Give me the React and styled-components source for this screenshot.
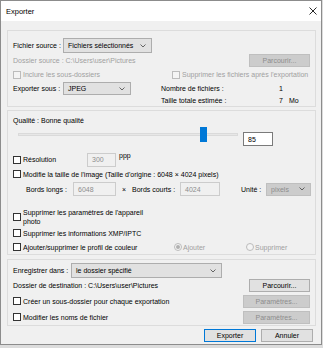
import React from 'react'
import styled, { createGlobalStyle } from 'styled-components'

const GlobalStyle = createGlobalStyle`
  html, body {
    margin: 0;
    padding: 0;
    background: #dcdcdc;
  }
  body {
    font-family: "Liberation Sans", Arial, sans-serif;
    font-size: 7px;
    color: #000;
  }
`

const Window = styled.div`
  box-sizing: border-box;
  width: 322px;
  height: 345px;
  border: 1px solid #8c8c8c;
  background: #f0f0f0;
  display: flex;
  flex-direction: column;
`

const TitleBar = styled.div`
  height: 20px;
  background: #fff;
  display: flex;
  align-items: center;
  justify-content: space-between;
  padding: 0 4px 0 5px;
  font-size: 7.5px;
`

const Content = styled.div`
  padding: 8px 5px 0 6px;
  display: flex;
  flex-direction: column;
`

const Group = styled.div`
  border: 1px solid #dcdcdc;
  margin-top: ${p => p.$mt || 0}px;
  padding: 0 5px ${p => p.$pb || 0}px 5px;
  display: flex;
  flex-direction: column;
`

const Row = styled.div`
  display: flex;
  align-items: ${p => p.$align || 'center'};
  height: ${p => p.$h}px;
  margin-top: ${p => p.$mt || 0}px;
  padding-left: ${p => p.$pl || 0}px;
`

const Label = styled.span`
  color: ${p => (p.$disabled ? '#a0a0a0' : '#000')};
  width: ${p => (p.$w ? `${p.$w}px` : 'auto')};
  flex: none;
  white-space: nowrap;
`

const Cell = styled.div`
  display: flex;
  align-items: center;
  width: ${p => p.$w}px;
  flex: none;
`

const Combo = styled.div`
  box-sizing: border-box;
  width: ${p => p.$w}px;
  height: ${p => p.$h || 15}px;
  border: 1px solid ${p => (p.$disabled ? '#bfbfbf' : '#adadad')};
  background: ${p => (p.$disabled ? '#cccccc' : '#e1e1e1')};
  color: ${p => (p.$disabled ? '#8d8d8d' : '#000')};
  display: flex;
  align-items: center;
  justify-content: space-between;
  padding: 0 5px 0 4px;
  flex: none;
`

const Field = styled.div`
  box-sizing: border-box;
  width: ${p => p.$w}px;
  height: 14px;
  border: 1px solid ${p => (p.$disabled ? '#cccccc' : '#7a7a7a')};
  background: ${p => (p.$disabled ? '#f0f0f0' : '#fff')};
  color: ${p => (p.$disabled ? '#8d8d8d' : '#000')};
  display: flex;
  align-items: center;
  padding-left: 4px;
  margin-top: ${p => p.$mt || 0}px;
  flex: none;
`

const Button = styled.div`
  box-sizing: border-box;
  width: ${p => p.$w}px;
  height: 13px;
  margin-left: ${p => (p.$auto ? 'auto' : '0')};
  border: 1px solid ${p => (p.$default ? '#0078d7' : p.$disabled ? '#bfbfbf' : '#adadad')};
  background: ${p => (p.$disabled ? '#cccccc' : '#e1e1e1')};
  color: ${p => (p.$disabled ? '#8d8d8d' : '#000')};
  display: flex;
  align-items: center;
  justify-content: center;
  flex: none;
`

const Box = styled.span`
  box-sizing: border-box;
  width: 8px;
  height: 8px;
  border: 1px solid ${p => (p.$disabled ? '#bcbcbc' : '#333')};
  background: ${p => (p.$disabled ? '#f4f4f4' : '#fff')};
  margin-right: 2px;
  flex: none;
`

const Radio = styled.span`
  box-sizing: border-box;
  width: 8px;
  height: 8px;
  border-radius: 50%;
  border: 1px solid #bcbcbc;
  background: #f4f4f4;
  margin-right: 1px;
  flex: none;
  display: flex;
  align-items: center;
  justify-content: center;
  &::after {
    content: '';
    display: ${p => (p.$on ? 'block' : 'none')};
    width: 4px;
    height: 4px;
    border-radius: 50%;
    background: #b0b0b0;
  }
`

const SliderWrap = styled.div`
  position: relative;
  width: 220px;
  height: 15px;
  margin-left: 5px;
  flex: none;
  display: flex;
  align-items: center;
`

const Track = styled.div`
  width: 100%;
  height: 3px;
  background: #e7e7e7;
  border: 1px solid #dadada;
  box-sizing: border-box;
`

const Thumb = styled.div`
  position: absolute;
  top: 0;
  left: 182px;
  width: 7px;
  height: 15px;
  background: #0078d7;
  box-sizing: border-box;
`

const Stats = styled.div`
  display: grid;
  grid-template-columns: 118px 10px auto;
  grid-auto-rows: 12px;
  align-items: center;
`

const Wrapped = styled.span`
  width: 130px;
  line-height: 9px;
`

const Footer = styled.div`
  display: flex;
  justify-content: flex-end;
  gap: 5px;
  margin-top: 3px;
  padding-right: 3px;
`

const Chevron = () => (
  <svg width="6" height="4" viewBox="0 0 6 4">
    <polyline points="0.5,0.5 3,3 5.5,0.5" fill="none" stroke="#444" strokeWidth="0.8" />
  </svg>
)

const Close = () => (
  <svg width="8" height="8" viewBox="0 0 8 8">
    <path d="M0.5 0.5 L7.5 7.5 M7.5 0.5 L0.5 7.5" stroke="#111" strokeWidth="0.9" />
  </svg>
)

const Check = ({ disabled, children, w }) => (
  <Cell $w={w}>
    <Box $disabled={disabled} />
    <Label $disabled={disabled}>{children}</Label>
  </Cell>
)

export default function App() {
  return (
    <>
      <GlobalStyle />
      <Window>
        <TitleBar>
          <span>Exporter</span>
          <Close />
        </TitleBar>
        <Content>
          <Group $mt={1}>
            <Row $h={15} $mt={7}>
              <Label $w={50}>Fichier source :</Label>
              <Combo $w={89}>
                <span>Fichiers sélectionnés</span>
                <Chevron />
              </Combo>
            </Row>
            <Row $h={14}>
              <Label $disabled>Dossier source : C:\Users\user\Pictures</Label>
              <Button $w={61} $auto $disabled>Parcourir...</Button>
            </Row>
            <Row $h={15}>
              <Check w={159} disabled>Inclure les sous-dossiers</Check>
              <Check disabled>Supprimer les fichiers après l'exportation</Check>
            </Row>
            <Row $h={24} $align="flex-start">
              <Cell $w={148}>
                <Label $w={50}>Exporter sous :</Label>
                <Combo $w={68} $h={13}>
                  <span>JPEG</span>
                  <Chevron />
                </Combo>
              </Cell>
              <Stats>
                <span>Nombre de fichiers :</span>
                <span>1</span>
                <span />
                <span>Taille totale estimée :</span>
                <span>7</span>
                <span>Mo</span>
              </Stats>
            </Row>
          </Group>

          <Group $mt={3}>
            <Row $h={12} $mt={3}>
              <Label>Qualité : Bonne qualité</Label>
            </Row>
            <Row $h={19} $mt={1} $align="flex-start">
              <SliderWrap>
                <Track />
                <Thumb />
              </SliderWrap>
              <Field $w={30} $mt={5} style={{ marginLeft: 5 }}>85</Field>
            </Row>
            <Row $h={15} $mt={6}>
              <Check w={74}>Résolution</Check>
              <Field $w={29} $disabled>300</Field>
              <Label style={{ marginLeft: 3, alignSelf: 'flex-start' }}>ppp</Label>
            </Row>
            <Row $h={14}>
              <Check>Modifie la taille de l'image (Taille d'origine : 6048 × 4024 pixels)</Check>
            </Row>
            <Row $h={16} $pl={13}>
              <Label $w={47}>Bords longs :</Label>
              <Field $w={43} $disabled>6048</Field>
              <Label $w={16} style={{ textAlign: 'center' }}>×</Label>
              <Label $w={48}>Bords courts :</Label>
              <Field $w={40} $disabled>4024</Field>
              <Label $w={25} style={{ marginLeft: 21 }}>Unité :</Label>
              <Combo $w={45} $h={13} $disabled>
                <span>pixels</span>
                <Chevron />
              </Combo>
            </Row>
            <Row $h={19} $mt={10}>
              <Box />
              <Wrapped>Supprimer les paramètres de l'appareil photo</Wrapped>
            </Row>
            <Row $h={14}>
              <Check>Supprimer les informations XMP/IPTC</Check>
            </Row>
            <Row $h={14}>
              <Check w={161}>Ajouter/supprimer le profil de couleur</Check>
              <Cell $w={72}>
                <Radio $on />
                <Label $disabled>Ajouter</Label>
              </Cell>
              <Cell>
                <Radio />
                <Label $disabled>Supprimer</Label>
              </Cell>
            </Row>
          </Group>

          <Group $mt={4} $pb={1}>
            <Row $h={15} $mt={3}>
              <Label $w={58}>Enregistrer dans :</Label>
              <Combo $w={151}>
                <span>le dossier spécifié</span>
                <Chevron />
              </Combo>
            </Row>
            <Row $h={14}>
              <Label>Dossier de destination : C:\Users\user\Pictures</Label>
              <Button $w={61} $auto>Parcourir...</Button>
            </Row>
            <Row $h={14} $mt={2}>
              <Check>Créer un sous-dossier pour chaque exportation</Check>
              <Button $w={67} $auto $disabled>Paramètres...</Button>
            </Row>
            <Row $h={14} $mt={2}>
              <Check>Modifier les noms de fichier</Check>
              <Button $w={67} $auto $disabled>Paramètres...</Button>
            </Row>
          </Group>

          <Footer>
            <Button $w={52} $default>Exporter</Button>
            <Button $w={52}>Annuler</Button>
          </Footer>
        </Content>
      </Window>
    </>
  )
}
